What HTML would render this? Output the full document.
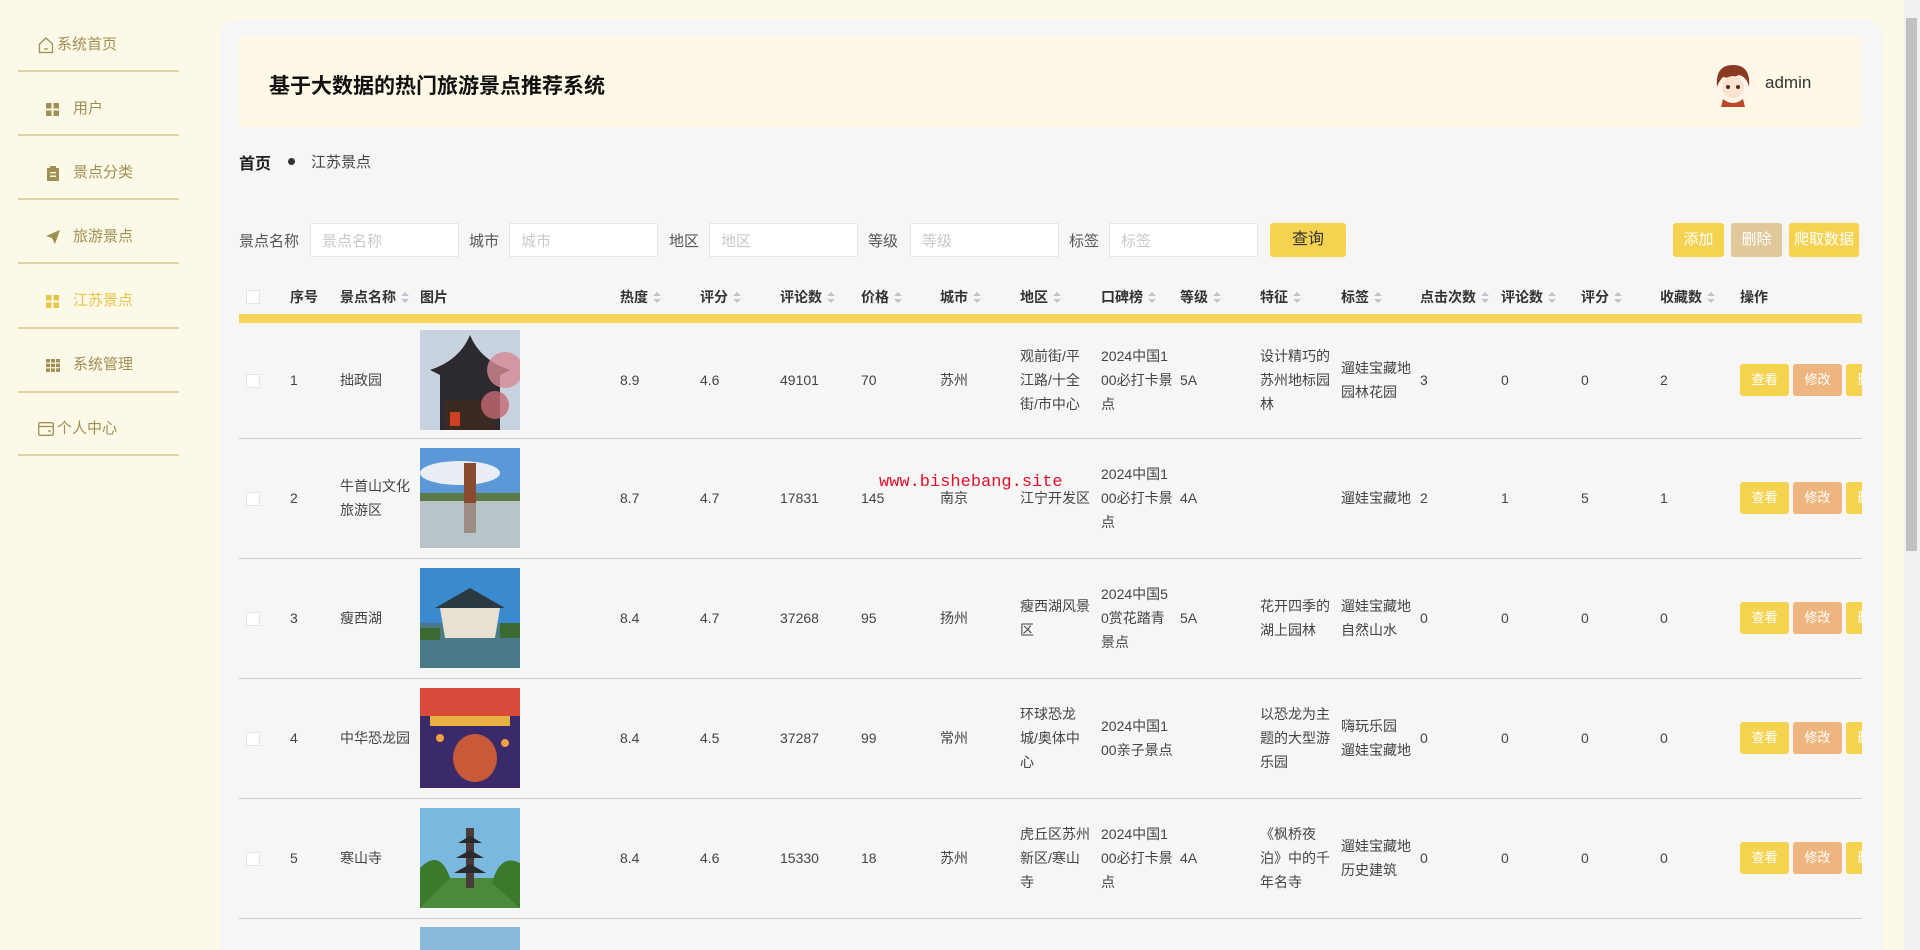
<!DOCTYPE html>
<html><head><meta charset="utf-8">
<style>
*{margin:0;padding:0;box-sizing:border-box}
html,body{width:1920px;height:950px;overflow:hidden}
body{background:#fdf9e9;font-family:"Liberation Sans","Noto Sans CJK SC",sans-serif;color:#333;position:relative}
.side{position:absolute;left:18px;top:0;width:161px}
.item{position:absolute;left:0;width:161px;height:64px;font-size:15px;color:#a08f52}
.item .t{position:absolute;top:0;line-height:20px}
.item .ln{position:absolute;left:0;width:161px;height:2px;background:#dfd2a6}
.main{position:absolute;left:220px;top:20px;width:1663px;height:930px;background:#f6f6f6;border-radius:18px 18px 0 0}
.hdr{position:absolute;left:239px;top:37px;width:1623px;height:90px;background:#fef9e6}
.title{position:absolute;left:269px;top:70px;font-size:21px;font-weight:bold;color:#111}
.admin{position:absolute;left:1765px;top:73px;font-size:17px;color:#333}
.bc{position:absolute;top:150px;font-size:16px}
.lab{position:absolute;top:230px;font-size:15px;color:#555}
.inp{position:absolute;top:223px;height:34px;width:149px;background:#fff;border:1px solid #e6e6e6;border-radius:2px;font-size:15px;color:#c8c8c8;padding:6px 11px}
.btn{position:absolute;top:223px;height:34px;border-radius:3px;font-size:15px;color:#fff;text-align:center;line-height:34px}
.tbl{position:absolute;left:239px;top:280px;width:1623px;height:670px;overflow:hidden}
table{border-collapse:collapse;table-layout:fixed;width:1641px}
th{height:38px;font-size:14px;font-weight:600;color:#333;text-align:left;vertical-align:middle;padding:0;border-bottom:9px solid #f6d55c;white-space:nowrap}
td{height:120px;font-size:14px;color:#444;text-align:left;vertical-align:middle;padding:0 8px 0 0;line-height:24px;border-bottom:1px solid #c9c9c9}
td.k{padding-right:6px;word-break:break-all}
td.op{white-space:nowrap;padding:0}
.s{display:inline-block;width:8px;height:12px;vertical-align:middle;margin-left:5px;position:relative}
.s:before{content:"";position:absolute;left:0;top:0;border:4px solid transparent;border-bottom:4px solid #c0c4cc;border-top:0}
.s:after{content:"";position:absolute;left:0;top:7px;border:4px solid transparent;border-top:4px solid #c0c4cc;border-bottom:0}
.cb{display:inline-block;width:14px;height:14px;background:#fff;border:1px solid #e4e4e4;margin-left:7px;vertical-align:middle}
.img{width:100px;height:100px;display:block}
.ab{display:inline-block;width:49px;height:32px;line-height:32px;text-align:center;color:#fff;font-size:13px;border-radius:3px;margin-right:4px;vertical-align:middle}
.y{background:#f5d250}.p{background:#eeb67e}
.wm{position:absolute;left:879px;top:473px;font-family:"Liberation Mono",monospace;font-size:17px;color:#e0102a}
.sb{position:absolute;left:1904px;top:0;width:16px;height:950px;background:#f1f1f1}
.th{position:absolute;left:1906px;top:18px;width:11px;height:533px;background:#c1c1c1}
</style></head><body>
<div class="side">
 <div class="item" style="top:35px"><svg style="position:absolute;left:20px;top:1px" width="16" height="18" viewBox="0 0 16 18"><path d="M1.5 8 L8 2 L14.5 8 V16.5 H1.5 Z" fill="none" stroke="#a08f52" stroke-width="1.3"/><path d="M6 12.5 Q8 14 10 12.5" fill="none" stroke="#a08f52" stroke-width="1.2"/></svg><span class="t" style="left:39px">系统首页</span><div class="ln" style="top:35px"></div></div>
 <div class="item" style="top:99px"><svg style="position:absolute;left:28px;top:4px" width="13" height="13"><rect x="0" y="0" width="5.5" height="5.5" fill="#a08f52"/><rect x="7.5" y="0" width="5.5" height="5.5" fill="#a08f52"/><rect x="0" y="7.5" width="5.5" height="5.5" fill="#a08f52"/><rect x="7.5" y="7.5" width="5.5" height="5.5" fill="#a08f52"/></svg><span class="t" style="left:55px">用户</span><div class="ln" style="top:35px"></div></div>
 <div class="item" style="top:163px"><svg style="position:absolute;left:29px;top:3px" width="12" height="15"><rect x="0" y="2" width="12" height="13" fill="#a08f52"/><rect x="3" y="0" width="6" height="3" fill="#a08f52"/><rect x="3" y="6" width="6" height="1.4" fill="#fdf9e9"/><rect x="3" y="9.5" width="6" height="1.4" fill="#fdf9e9"/></svg><span class="t" style="left:55px">景点分类</span><div class="ln" style="top:35px"></div></div>
 <div class="item" style="top:227px"><svg style="position:absolute;left:28px;top:3px" width="14" height="14"><path d="M0 6 L14 0 L9 14 L6 8 Z" fill="#a08f52"/></svg><span class="t" style="left:55px">旅游景点</span><div class="ln" style="top:35px"></div></div>
 <div class="item" style="top:291px;color:#e6c54a"><svg style="position:absolute;left:28px;top:4px" width="13" height="13"><rect x="0" y="0" width="5.5" height="5.5" fill="#e6c54a"/><rect x="7.5" y="0" width="5.5" height="5.5" fill="#e6c54a"/><rect x="0" y="7.5" width="5.5" height="5.5" fill="#e6c54a"/><rect x="7.5" y="7.5" width="5.5" height="5.5" fill="#e6c54a"/></svg><span class="t" style="left:55px">江苏景点</span><div class="ln" style="top:36px"></div></div>
 <div class="item" style="top:355px"><svg style="position:absolute;left:28px;top:4px" width="14" height="13"><g fill="#a08f52"><rect x="0" y="0" width="4" height="3.5"/><rect x="5" y="0" width="4" height="3.5"/><rect x="10" y="0" width="4" height="3.5"/><rect x="0" y="4.7" width="4" height="3.5"/><rect x="5" y="4.7" width="4" height="3.5"/><rect x="10" y="4.7" width="4" height="3.5"/><rect x="0" y="9.4" width="4" height="3.5"/><rect x="5" y="9.4" width="4" height="3.5"/><rect x="10" y="9.4" width="4" height="3.5"/></g></svg><span class="t" style="left:55px">系统管理</span><div class="ln" style="top:36px"></div></div>
 <div class="item" style="top:419px"><svg style="position:absolute;left:20px;top:3px" width="16" height="14"><rect x="0.7" y="0.7" width="14.6" height="12.6" rx="1.5" fill="none" stroke="#a08f52" stroke-width="1.3"/><line x1="1" y1="4.5" x2="15" y2="4.5" stroke="#a08f52" stroke-width="1.3"/><line x1="10" y1="9" x2="13" y2="9" stroke="#a08f52" stroke-width="1.3"/></svg><span class="t" style="left:39px">个人中心</span><div class="ln" style="top:35px"></div></div>
</div>
<div class="main"></div>
<div class="hdr"></div>
<div class="title">基于大数据的热门旅游景点推荐系统</div>
<svg style="position:absolute;left:1709px;top:59px" width="48" height="50" viewBox="0 0 48 50"><circle cx="24" cy="25" r="22" fill="#fdf4ea"/><path d="M8 28 Q6 6 24 6 Q42 6 40 28 Q38 18 30 16 Q22 20 14 18 Q10 22 8 28Z" fill="#8a3a20"/><ellipse cx="24" cy="28" rx="11" ry="11" fill="#fbe3d2"/><circle cx="19" cy="28" r="2" fill="#5a2a18"/><circle cx="29" cy="28" r="2" fill="#5a2a18"/><path d="M14 40 Q24 48 34 40 L36 48 L12 48Z" fill="#b84a2a"/></svg>
<div class="admin">admin</div>
<div class="bc" style="left:239px;font-weight:600;color:#222">首页</div>
<div style="position:absolute;left:288px;top:158px;width:7px;height:7px;border-radius:50%;background:#333"></div>
<div class="bc" style="left:311px;color:#444;font-size:15px;top:151px">江苏景点</div>

<div class="lab" style="left:239px">景点名称</div><div class="inp" style="left:310px">景点名称</div>
<div class="lab" style="left:469px">城市</div><div class="inp" style="left:509px">城市</div>
<div class="lab" style="left:669px">地区</div><div class="inp" style="left:709px">地区</div>
<div class="lab" style="left:868px">等级</div><div class="inp" style="left:910px">等级</div>
<div class="lab" style="left:1069px">标签</div><div class="inp" style="left:1109px">标签</div>
<div class="btn" style="left:1270px;width:76px;background:#f5d250;color:#333;font-size:16px">查询</div>
<div class="btn" style="left:1673px;width:51px;background:#f5d250">添加</div>
<div class="btn" style="left:1731px;width:51px;background:#e0c89a">删除</div>
<div class="btn" style="left:1789px;width:70px;background:#f5d250">爬取数据</div>

<div class="tbl"><table>
<colgroup><col style="width:51px"><col style="width:50px"><col style="width:80px"><col style="width:200px"><col style="width:80px"><col style="width:80px"><col style="width:81px"><col style="width:79px"><col style="width:80px"><col style="width:81px"><col style="width:79px"><col style="width:80px"><col style="width:81px"><col style="width:79px"><col style="width:81px"><col style="width:80px"><col style="width:79px"><col style="width:80px"><col style="width:140px"></colgroup>
<tr><th><span class="cb" style="margin-top:-2px"></span></th><th>序号</th><th>景点名称<span class="s"></span></th><th>图片</th><th>热度<span class="s"></span></th><th>评分<span class="s"></span></th><th>评论数<span class="s"></span></th><th>价格<span class="s"></span></th><th>城市<span class="s"></span></th><th>地区<span class="s"></span></th><th>口碑榜<span class="s"></span></th><th>等级<span class="s"></span></th><th>特征<span class="s"></span></th><th>标签<span class="s"></span></th><th>点击次数<span class="s"></span></th><th>评论数<span class="s"></span></th><th>评分<span class="s"></span></th><th>收藏数<span class="s"></span></th><th>操作</th></tr>
<tr><td><span class="cb"></span></td><td>1</td><td>拙政园</td><td><svg class="img" viewBox="0 0 100 100"><rect width="100" height="100" fill="#c9d3df"/><path d="M10 40 Q40 30 50 5 Q60 30 90 40 L80 45 L80 100 L20 100 L20 45Z" fill="#2c2a30"/><rect x="25" y="70" width="50" height="30" fill="#3a2a22"/><circle cx="85" cy="40" r="18" fill="#d68a94" opacity=".8"/><circle cx="75" cy="75" r="14" fill="#c66a74" opacity=".8"/><rect x="30" y="82" width="10" height="14" fill="#d04020"/></svg></td><td>8.9</td><td>4.6</td><td>49101</td><td>70</td><td>苏州</td><td>观前街/平江路/十全街/市中心</td><td class="k">2024中国100必打卡景点</td><td>5A</td><td>设计精巧的苏州地标园林</td><td class="k">遛娃宝藏地园林花园</td><td>3</td><td>0</td><td>0</td><td>2</td><td class="op"><span class="ab y">查看</span><span class="ab p">修改</span><span class="ab y">删除</span></td></tr>
<tr><td><span class="cb"></span></td><td>2</td><td>牛首山文化旅游区</td><td><svg class="img" viewBox="0 0 100 100"><rect width="100" height="55" fill="#5a98d8"/><ellipse cx="40" cy="25" rx="40" ry="12" fill="#e8eef4"/><rect y="50" width="100" height="50" fill="#b8c4c8"/><rect y="45" width="100" height="8" fill="#5c7a48"/><rect x="44" y="15" width="12" height="40" fill="#8a4a30"/><rect x="44" y="55" width="12" height="30" fill="#8a6a58" opacity=".6"/></svg></td><td>8.7</td><td>4.7</td><td>17831</td><td>145</td><td>南京</td><td>江宁开发区</td><td class="k">2024中国100必打卡景点</td><td>4A</td><td></td><td class="k">遛娃宝藏地</td><td>2</td><td>1</td><td>5</td><td>1</td><td class="op"><span class="ab y">查看</span><span class="ab p">修改</span><span class="ab y">删除</span></td></tr>
<tr><td><span class="cb"></span></td><td>3</td><td>瘦西湖</td><td><svg class="img" viewBox="0 0 100 100"><rect width="100" height="60" fill="#3a8ad0"/><rect y="55" width="100" height="45" fill="#4a7a88"/><path d="M20 40 L50 25 L80 40 L75 70 L25 70Z" fill="#e8e0d0"/><path d="M15 40 L50 20 L85 40Z" fill="#2a3a40"/><rect y="60" width="20" height="12" fill="#3a6a30"/><rect x="80" y="55" width="20" height="15" fill="#3a6a30"/></svg></td><td>8.4</td><td>4.7</td><td>37268</td><td>95</td><td>扬州</td><td>瘦西湖风景区</td><td class="k">2024中国50赏花踏青景点</td><td>5A</td><td>花开四季的湖上园林</td><td class="k">遛娃宝藏地自然山水</td><td>0</td><td>0</td><td>0</td><td>0</td><td class="op"><span class="ab y">查看</span><span class="ab p">修改</span><span class="ab y">删除</span></td></tr>
<tr><td><span class="cb"></span></td><td>4</td><td>中华恐龙园</td><td><svg class="img" viewBox="0 0 100 100"><rect width="100" height="100" fill="#3a2a6a"/><rect y="0" width="100" height="28" fill="#d84a3a"/><rect x="10" y="28" width="80" height="10" fill="#e8b040"/><ellipse cx="55" cy="70" rx="22" ry="24" fill="#c85a3a"/><circle cx="20" cy="50" r="4" fill="#f0a040"/><circle cx="85" cy="55" r="4" fill="#f0a040"/></svg></td><td>8.4</td><td>4.5</td><td>37287</td><td>99</td><td>常州</td><td>环球恐龙城/奥体中心</td><td class="k">2024中国100亲子景点</td><td></td><td>以恐龙为主题的大型游乐园</td><td class="k">嗨玩乐园 遛娃宝藏地</td><td>0</td><td>0</td><td>0</td><td>0</td><td class="op"><span class="ab y">查看</span><span class="ab p">修改</span><span class="ab y">删除</span></td></tr>
<tr><td><span class="cb"></span></td><td>5</td><td>寒山寺</td><td><svg class="img" viewBox="0 0 100 100"><rect width="100" height="100" fill="#7ab8e0"/><rect y="70" width="100" height="30" fill="#4a8a3a"/><path d="M0 60 Q20 40 30 70 L0 100Z" fill="#3a7a2a"/><path d="M100 55 Q80 45 72 75 L100 100Z" fill="#3a7a2a"/><rect x="46" y="20" width="8" height="60" fill="#4a3a3a"/><path d="M38 35 L62 35 L50 28Z M36 50 L64 50 L50 42Z M34 65 L66 65 L50 56Z" fill="#2a2a2a"/></svg></td><td>8.4</td><td>4.6</td><td>15330</td><td>18</td><td>苏州</td><td>虎丘区苏州新区/寒山寺</td><td class="k">2024中国100必打卡景点</td><td>4A</td><td>《枫桥夜泊》中的千年名寺</td><td class="k">遛娃宝藏地历史建筑</td><td>0</td><td>0</td><td>0</td><td>0</td><td class="op"><span class="ab y">查看</span><span class="ab p">修改</span><span class="ab y">删除</span></td></tr>
<tr><td><span class="cb"></span></td><td>6</td><td></td><td style="vertical-align:top;padding-top:8px"><svg class="img" viewBox="0 0 100 100"><rect width="100" height="100" fill="#8ab8d8"/></svg></td><td></td><td></td><td></td><td></td><td></td><td></td><td></td><td></td><td></td><td></td><td></td><td></td><td></td><td></td><td class="op"></td></tr>
</table></div>
<div class="wm">www.bishebang.site</div>
<div class="sb"></div><div class="th"></div>
</body></html>
